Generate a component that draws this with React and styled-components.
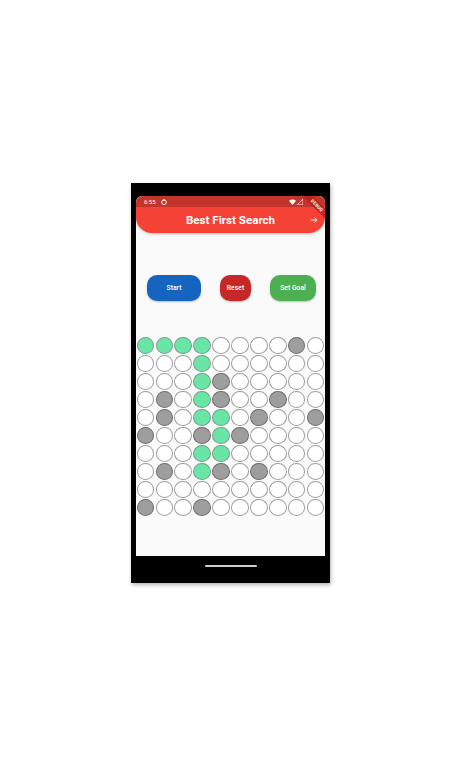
import React from 'react';
import styled, { createGlobalStyle } from 'styled-components';

const GlobalStyle = createGlobalStyle`
  html, body {
    margin: 0;
    padding: 0;
    background: #ffffff;
    font-family: Roboto, "Liberation Sans", sans-serif;
  }
`;

// 0 = empty, 1 = path, 2 = wall
const GRID = [
  [1, 1, 1, 1, 0, 0, 0, 0, 2, 0],
  [0, 0, 0, 1, 0, 0, 0, 0, 0, 0],
  [0, 0, 0, 1, 2, 0, 0, 0, 0, 0],
  [0, 2, 0, 1, 2, 0, 0, 2, 0, 0],
  [0, 2, 0, 1, 1, 0, 2, 0, 0, 2],
  [2, 0, 0, 2, 1, 2, 0, 0, 0, 0],
  [0, 0, 0, 1, 1, 0, 0, 0, 0, 0],
  [0, 2, 0, 1, 2, 0, 2, 0, 0, 0],
  [0, 0, 0, 0, 0, 0, 0, 0, 0, 0],
  [2, 0, 0, 2, 0, 0, 0, 0, 0, 0],
];

const CELL_COLORS = {
  0: { fill: '#ffffff', border: '#9e9e9e' },
  1: { fill: '#69e6a6', border: '#7f9c8c' },
  2: { fill: '#9e9e9e', border: '#6f6f6f' },
};

function App() {
  return (
    <Styled.Page>
      <GlobalStyle />
      <Styled.Phone>
        <Styled.Screen>
          <Styled.AppBar>
            <Styled.StatusBar>
              <Styled.StatusLeft>
                <span>6:55</span>
                <svg width="6" height="6" viewBox="0 0 10 10">
                  <circle cx="5" cy="5.5" r="3.8" fill="none" stroke="#fff" strokeWidth="1.6" />
                  <rect x="3" y="0.5" width="4" height="2" fill="#fff" />
                </svg>
              </Styled.StatusLeft>
              <Styled.StatusRight>
                <svg width="7" height="6" viewBox="0 0 12 10">
                  <path d="M6 10 L0 3 Q6 -2 12 3 Z" fill="#fff" />
                </svg>
                <svg width="6" height="6" viewBox="0 0 10 10">
                  <path d="M10 0 L10 10 L0 10 Z" fill="none" stroke="#fff" strokeWidth="1.4" />
                </svg>
              </Styled.StatusRight>
            </Styled.StatusBar>
            <Styled.TitleRow>
              <Styled.Title>Best First Search</Styled.Title>
              <Styled.Action>
                <svg width="10" height="10" viewBox="0 0 24 24">
                  <path d="M4 12 H19 M13 6 L19 12 L13 18" fill="none" stroke="#fff" strokeWidth="2.2" />
                </svg>
              </Styled.Action>
            </Styled.TitleRow>
            <Styled.Banner>DEBUG</Styled.Banner>
          </Styled.AppBar>

          <Styled.Buttons>
            <Styled.Button $bg="#1565c0" $w={54}>Start</Styled.Button>
            <Styled.Button $bg="#c62828" $w={31}>Reset</Styled.Button>
            <Styled.Button $bg="#4caf50" $w={46}>Set Goal</Styled.Button>
          </Styled.Buttons>

          <Styled.Grid>
            {GRID.flatMap((row, r) =>
              row.map((v, c) => (
                <Styled.Cell key={`${r}-${c}`} $fill={CELL_COLORS[v].fill} $border={CELL_COLORS[v].border} />
              ))
            )}
          </Styled.Grid>
        </Styled.Screen>
        <Styled.NavBar>
          <Styled.Handle />
        </Styled.NavBar>
      </Styled.Phone>
    </Styled.Page>
  );
}

const Styled = {
  Page: styled.div`
    width: 451px;
    height: 759px;
    padding: 183px 0 0 131px;
    box-sizing: border-box;
  `,
  Phone: styled.div`
    width: 199px;
    height: 400px;
    background: #000;
    padding: 13px 5px 0 5px;
    box-sizing: border-box;
    display: flex;
    flex-direction: column;
    box-shadow: 1px 2px 4px rgba(0, 0, 0, 0.3);
  `,
  Screen: styled.div`
    width: 189px;
    height: 360px;
    background: #fafafa;
    border-radius: 6px 6px 0 0;
    overflow: hidden;
    display: flex;
    flex-direction: column;
  `,
  AppBar: styled.div`
    position: relative;
    height: 37px;
    background: #f44336;
    border-radius: 6px 6px 16px 16px;
    overflow: hidden;
    display: flex;
    flex-direction: column;
    box-shadow: 0 1px 3px rgba(0, 0, 0, 0.25);
    flex-shrink: 0;
  `,
  StatusBar: styled.div`
    height: 11px;
    background: rgba(0, 0, 0, 0.2);
    display: flex;
    align-items: center;
    justify-content: space-between;
    padding: 0 22px 0 8px;
    color: #fff;
    font-size: 6px;
  `,
  StatusLeft: styled.div`
    display: flex;
    align-items: center;
    gap: 5px;
  `,
  StatusRight: styled.div`
    display: flex;
    align-items: center;
    gap: 1px;
  `,
  TitleRow: styled.div`
    flex: 1;
    display: flex;
    align-items: center;
    justify-content: center;
    position: relative;
  `,
  Title: styled.div`
    color: #fff;
    font-weight: 700;
    font-size: 11.6px;
    margin-top: -1px;
  `,
  Action: styled.div`
    position: absolute;
    right: 6px;
    top: 8px;
    display: flex;
  `,
  Banner: styled.div`
    position: absolute;
    top: 6px;
    right: -14px;
    width: 44px;
    height: 7px;
    background: rgba(183, 28, 28, 0.75);
    color: #fff;
    font-size: 4.5px;
    font-weight: 700;
    line-height: 7px;
    text-align: center;
    transform: rotate(45deg);
    letter-spacing: 0.2px;
  `,
  Buttons: styled.div`
    display: flex;
    gap: 19px;
    padding: 0 9px 0 11px;
    margin-top: 42px;
  `,
  Button: styled.div`
    width: ${p => p.$w}px;
    height: 26px;
    border-radius: 10px;
    background: ${p => p.$bg};
    color: #fff;
    font-size: 6.8px;
    font-weight: 500;
    display: flex;
    align-items: center;
    justify-content: center;
    box-shadow: 0 1px 2px rgba(0, 0, 0, 0.25);
  `,
  Grid: styled.div`
    margin-top: 35px;
    display: grid;
    grid-template-columns: repeat(10, 1fr);
    grid-auto-rows: 18px;
  `,
  Cell: styled.div`
    margin: 0.5px 0.7px;
    border-radius: 50%;
    background: ${p => p.$fill};
    border: 1px solid ${p => p.$border};
  `,
  NavBar: styled.div`
    flex: 1;
    display: flex;
    justify-content: center;
    padding-top: 9px;
  `,
  Handle: styled.div`
    width: 52px;
    height: 2px;
    border-radius: 1px;
    background: #cfcfcf;
  `,
};

export default App;
